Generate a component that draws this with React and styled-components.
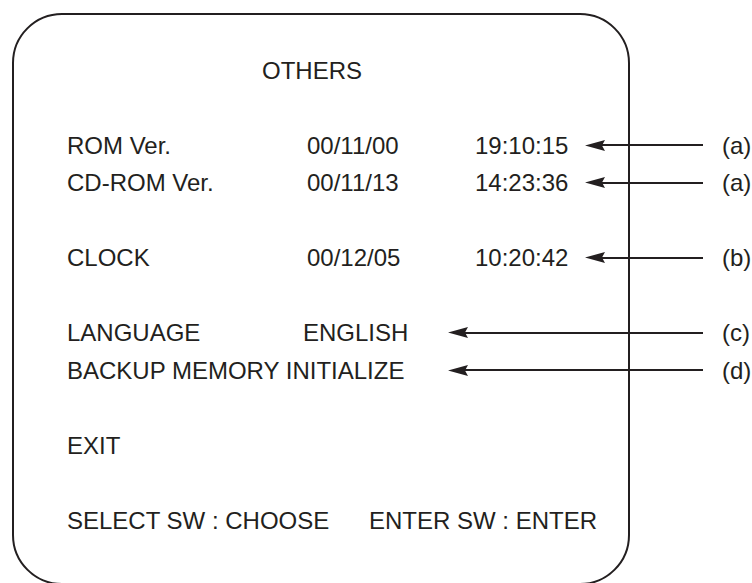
import React from 'react';
import styled, { createGlobalStyle } from 'styled-components';

const ink = '#231f20';

const Global = createGlobalStyle`
    html, body {
        margin: 0;
        padding: 0;
        overflow: hidden;
        background: #ffffff;
    }
    body {
        font-family: 'Liberation Sans', Arial, sans-serif;
        color: ${ink};
    }
`;

const Page = styled.div`
    width: 752px;
    height: 583px;
    padding: 13px 0 0 12px;
    box-sizing: border-box;
`;

const Screen = styled.div`
    width: 618px;
    height: 572px;
    box-sizing: border-box;
    border: 2px solid ${ink};
    border-radius: 50px;
    padding: 36.5px 0 0 53px;
`;

const Line = styled.div`
    display: flex;
    align-items: center;
    height: 37.5px;
    font-size: 24px;
    line-height: 37.5px;
    white-space: nowrap;
    margin-top: ${p => (p.$skip ? '37.5px' : '0')};
    margin-right: ${p => (p.$note ? '-124px' : '0')};
`;

const Title = styled.span`
    margin-left: 195px;
`;

const Cell = styled.span`
    flex: none;
    width: ${p => (p.$w ? `${p.$w}px` : 'auto')};
`;

const Arrow = styled.span`
    flex: 1;
    display: flex;
    align-items: center;
    margin-right: 19px;

    svg {
        flex: none;
        display: block;
    }
`;

const Shaft = styled.span`
    flex: 1;
    height: 2px;
    margin-left: -3px;
    background: ${ink};
`;

const Tag = styled.span`
    flex: none;
    width: 30px;
`;

const Pointer = () => (
    <Arrow>
        <svg width="20" height="11" viewBox="0 0 20 11">
            <path d="M0 5.5 L20 0 L17 5.5 L20 11 Z" fill={ink} />
        </svg>
        <Shaft />
    </Arrow>
);

const versions = [
    { label: 'ROM Ver.', date: '00/11/00', time: '19:10:15', tag: '(a)' },
    { label: 'CD-ROM Ver.', date: '00/11/13', time: '14:23:36', tag: '(a)' },
];

export default function App() {
    return (
        <Page>
            <Global />
            <Screen>
                <Line>
                    <Title>OTHERS</Title>
                </Line>

                {versions.map((v, i) => (
                    <Line key={v.label} $note $skip={i === 0}>
                        <Cell $w={240}>{v.label}</Cell>
                        <Cell $w={168}>{v.date}</Cell>
                        <Cell $w={110}>{v.time}</Cell>
                        <Pointer />
                        <Tag>{v.tag}</Tag>
                    </Line>
                ))}

                <Line $note $skip>
                    <Cell $w={240}>CLOCK</Cell>
                    <Cell $w={168}>00/12/05</Cell>
                    <Cell $w={110}>10:20:42</Cell>
                    <Pointer />
                    <Tag>(b)</Tag>
                </Line>

                <Line $note $skip>
                    <Cell $w={236}>LANGUAGE</Cell>
                    <Cell $w={145}>ENGLISH</Cell>
                    <Pointer />
                    <Tag>(c)</Tag>
                </Line>
                <Line $note>
                    <Cell $w={381}>BACKUP MEMORY INITIALIZE</Cell>
                    <Pointer />
                    <Tag>(d)</Tag>
                </Line>

                <Line $skip>
                    <Cell>EXIT</Cell>
                </Line>

                <Line $skip>
                    <Cell $w={302}>SELECT SW : CHOOSE</Cell>
                    <Cell>ENTER SW : ENTER</Cell>
                </Line>
            </Screen>
        </Page>
    );
}
